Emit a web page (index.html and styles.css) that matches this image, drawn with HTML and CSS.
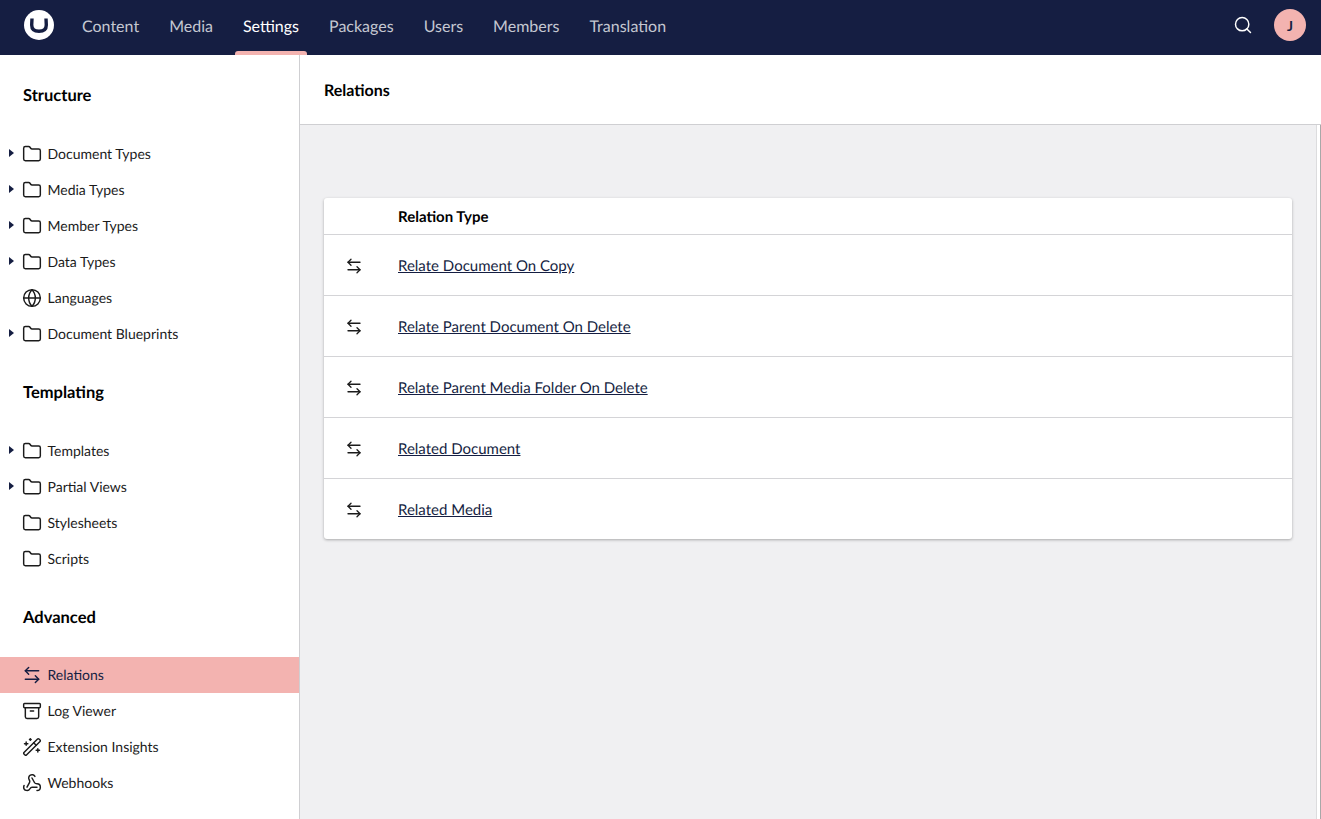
FILE: index.html
```html
<!DOCTYPE html>
<html lang="en">
<head>
  <meta charset="UTF-8">
  <title>Relations</title>
  <link rel="stylesheet" href="styles.css">
</head>
<body>
  <svg class="sprite" width="0" height="0">
    <symbol id="i-folder" viewBox="0 0 24 24"><path d="M20 20a2 2 0 0 0 2-2V8a2 2 0 0 0-2-2h-7.9a2 2 0 0 1-1.69-.9L9.6 3.9A2 2 0 0 0 7.93 3H4a2 2 0 0 0-2 2v13a2 2 0 0 0 2 2Z"/></symbol>
    <symbol id="i-globe" viewBox="0 0 24 24"><circle cx="12" cy="12" r="10"/><path d="M12 2a14.5 14.5 0 0 0 0 20 14.5 14.5 0 0 0 0-20"/><path d="M2 12h20"/></symbol>
    <symbol id="i-arrows" viewBox="0 0 24 24"><path d="M8 3 4 7l4 4"/><path d="M4 7h16"/><path d="m16 21 4-4-4-4"/><path d="M20 17H4"/></symbol>
    <symbol id="i-archive" viewBox="0 0 24 24"><rect x="2" y="3" width="20" height="5" rx="1"/><path d="M4 8v11a2 2 0 0 0 2 2h12a2 2 0 0 0 2-2V8"/><path d="M10 12h4"/></symbol>
    <symbol id="i-wand" viewBox="0 0 24 24"><path d="m21.64 3.64-1.28-1.28a1.21 1.21 0 0 0-1.72 0L2.36 18.64a1.21 1.21 0 0 0 0 1.72l1.28 1.28a1.2 1.2 0 0 0 1.72 0L21.64 5.36a1.2 1.2 0 0 0 0-1.72"/><path d="m14 7 3 3"/><path d="M5 6v4"/><path d="M19 14v4"/><path d="M10 2v2"/><path d="M7 8H3"/><path d="M21 16h-4"/><path d="M11 3H9"/></symbol>
    <symbol id="i-webhook" viewBox="0 0 24 24"><path d="M18 16.98h-5.99c-1.1 0-1.95.94-2.48 1.9A4 4 0 0 1 2 17c.01-.7.2-1.4.57-2"/><path d="m6 17 3.13-5.78c.53-.97.1-2.18-.5-3.1a4 4 0 1 1 6.89-4.06"/><path d="m12 6 3.13 5.73C15.66 12.7 16.9 13 18 13a4 4 0 0 1 0 8"/></symbol>
    <symbol id="i-search" viewBox="0 0 24 24"><circle cx="11" cy="11" r="8"/><path d="m21 21-4.3-4.3"/></symbol>
  </svg>

  <header class="topbar">
    <div class="logo">
      <svg viewBox="0 0 30 30" width="30" height="30">
        <path class="logo-u" d="M8 8.500 7.700 15c0 4.800 2.600 6.300 7.300 6.300s7.300-1.500 7.300-6.300L22 8.500"/>
      </svg>
    </div>
    <nav class="tabs">
      <a class="tab" href="#">Content</a>
      <a class="tab" href="#">Media</a>
      <a class="tab active" href="#">Settings</a>
      <a class="tab" href="#">Packages</a>
      <a class="tab" href="#">Users</a>
      <a class="tab" href="#">Members</a>
      <a class="tab" href="#">Translation</a>
    </nav>
    <div class="topbar-right">
      <svg class="icon search"><use href="#i-search"/></svg>
      <div class="avatar">J</div>
    </div>
  </header>

  <div class="layout">
    <aside class="sidebar">
      <section class="tree">
        <h3>Structure</h3>
        <a class="row has-caret" href="#"><svg class="icon"><use href="#i-folder"/></svg>Document Types</a>
        <a class="row has-caret" href="#"><svg class="icon"><use href="#i-folder"/></svg>Media Types</a>
        <a class="row has-caret" href="#"><svg class="icon"><use href="#i-folder"/></svg>Member Types</a>
        <a class="row has-caret" href="#"><svg class="icon"><use href="#i-folder"/></svg>Data Types</a>
        <a class="row" href="#"><svg class="icon"><use href="#i-globe"/></svg>Languages</a>
        <a class="row has-caret" href="#"><svg class="icon"><use href="#i-folder"/></svg>Document Blueprints</a>
      </section>
      <section class="tree">
        <h3>Templating</h3>
        <a class="row has-caret" href="#"><svg class="icon"><use href="#i-folder"/></svg>Templates</a>
        <a class="row has-caret" href="#"><svg class="icon"><use href="#i-folder"/></svg>Partial Views</a>
        <a class="row" href="#"><svg class="icon"><use href="#i-folder"/></svg>Stylesheets</a>
        <a class="row" href="#"><svg class="icon"><use href="#i-folder"/></svg>Scripts</a>
      </section>
      <section class="tree tree-last">
        <h3>Advanced</h3>
        <a class="row selected" href="#"><svg class="icon"><use href="#i-arrows"/></svg>Relations</a>
        <a class="row" href="#"><svg class="icon"><use href="#i-archive"/></svg>Log Viewer</a>
        <a class="row" href="#"><svg class="icon"><use href="#i-wand"/></svg>Extension Insights</a>
        <a class="row" href="#"><svg class="icon"><use href="#i-webhook"/></svg>Webhooks</a>
      </section>
    </aside>

    <main class="main">
      <div class="main-head">Relations</div>
      <div class="main-body">
        <div class="content">
          <div class="card">
            <div class="card-row card-head">
              <div class="cell-icon"></div>
              <div>Relation Type</div>
            </div>
            <div class="card-row">
              <div class="cell-icon"><svg class="icon"><use href="#i-arrows"/></svg></div>
              <a href="#">Relate Document On Copy</a>
            </div>
            <div class="card-row">
              <div class="cell-icon"><svg class="icon"><use href="#i-arrows"/></svg></div>
              <a href="#">Relate Parent Document On Delete</a>
            </div>
            <div class="card-row">
              <div class="cell-icon"><svg class="icon"><use href="#i-arrows"/></svg></div>
              <a href="#">Relate Parent Media Folder On Delete</a>
            </div>
            <div class="card-row">
              <div class="cell-icon"><svg class="icon"><use href="#i-arrows"/></svg></div>
              <a href="#">Related Document</a>
            </div>
            <div class="card-row">
              <div class="cell-icon"><svg class="icon"><use href="#i-arrows"/></svg></div>
              <a href="#">Related Media</a>
            </div>
          </div>
        </div>
        <div class="scrollbar"></div>
      </div>
    </main>
  </div>
</body>
</html>
```

FILE: styles.css
```css
* {
  box-sizing: border-box;
}
html, body {
  height: 100%;
}
body {
  margin: 0;
  font-family: Lato, "Liberation Sans", sans-serif;
  font-size: 14px;
  color: #1b1b1b;
  text-rendering: geometricPrecision;
  display: flex;
  flex-direction: column;
  overflow: hidden;
  background: #fff;
}
a {
  color: inherit;
  text-decoration: none;
}
.sprite {
  display: none;
}
.icon {
  width: 20px;
  height: 20px;
  flex: none;
  fill: none;
  stroke: currentColor;
  stroke-width: 1.75;
  stroke-linecap: round;
  stroke-linejoin: round;
}

/* top bar */
.topbar {
  height: 55px;
  flex: none;
  display: flex;
  align-items: center;
  background: #151e42;
  padding: 0 15px 5px 24px;
}
.logo {
  width: 30px;
  height: 30px;
  border-radius: 50%;
  background: #fff;
  margin-right: 13px;
}
.logo svg {
  display: block;
}
.logo-u {
  fill: none;
  stroke: #151e42;
  stroke-width: 3.4;
}
.tabs {
  display: flex;
  align-self: stretch;
  margin-bottom: -5px;
}
.tab {
  position: relative;
  display: flex;
  align-items: center;
  padding: 0 15px 3px;
  font-size: 16px;
  color: #c4c7d1;
}
.tab.active {
  color: #fff;
}
.tab.active::after {
  content: "";
  position: absolute;
  left: 7px;
  right: 7px;
  bottom: 0;
  height: 4px;
  border-radius: 3px 3px 0 0;
  background: #f3b3b0;
}
.topbar-right {
  margin-left: auto;
  display: flex;
  align-items: center;
  gap: 21px;
}
.search {
  color: #fff;
}
.avatar {
  width: 32px;
  height: 32px;
  border-radius: 50%;
  background: #f3b3b0;
  color: #151e42;
  font-weight: 700;
  font-size: 14px;
  display: flex;
  align-items: center;
  justify-content: center;
}

/* layout */
.layout {
  flex: 1;
  display: flex;
  min-height: 0;
}
.sidebar {
  width: 300px;
  flex: none;
  border-right: 1px solid #cfcfd2;
  background: #fff;
}
.tree h3 {
  margin: 0;
  height: 81px;
  padding: 31px 0 0 23px;
  font-size: 16.5px;
  line-height: 18px;
  font-weight: 700;
  color: #000;
}
.tree-last h3 {
  height: 80px;
}
.row {
  position: relative;
  display: flex;
  align-items: center;
  gap: 5.5px;
  height: 36px;
  padding: 0 0 2px 22px;
}
.row .icon {
  margin-top: 2px;
}
.has-caret::before {
  content: "";
  position: absolute;
  left: 9px;
  top: 13px;
  border-left: 5px solid #151e42;
  border-top: 4px solid transparent;
  border-bottom: 4px solid transparent;
}
.row.selected {
  background: #f3b3b0;
  color: #151e42;
}

/* main */
.main {
  flex: 1;
  display: flex;
  flex-direction: column;
  min-width: 0;
  background: #f0f0f2;
}
.main-head {
  height: 70px;
  flex: none;
  display: flex;
  align-items: center;
  padding: 1px 24px 0;
  background: #fff;
  border-bottom: 1px solid #cfcfd2;
  font-size: 16px;
  font-weight: 700;
  color: #000;
}
.main-body {
  flex: 1;
  display: flex;
  min-height: 0;
}
.content {
  flex: 1;
  padding: 73px 24px 0;
}
.scrollbar {
  width: 5px;
  flex: none;
  border-left: 1px solid #dcdcde;
  border-right: 1px solid #a8a8a8;
  background: #fff;
}
.card {
  background: #fff;
  border-radius: 3px;
  box-shadow: 0 1px 3px rgba(0, 0, 0, 0.3);
}
.card-row {
  display: flex;
  align-items: center;
  height: 61px;
  padding-top: 2px;
  border-top: 1px solid #d4d4d7;
  font-size: 15px;
}
.card-row a {
  color: #151e42;
  text-decoration: underline;
}
.card-row .icon {
  width: 18px;
  height: 18px;
}
.card-head {
  height: 36px;
  border-top: 0;
  font-weight: 700;
  color: #000;
}
.cell-icon {
  width: 74px;
  flex: none;
  display: flex;
  justify-content: center;
  padding-right: 15px;
}
```
